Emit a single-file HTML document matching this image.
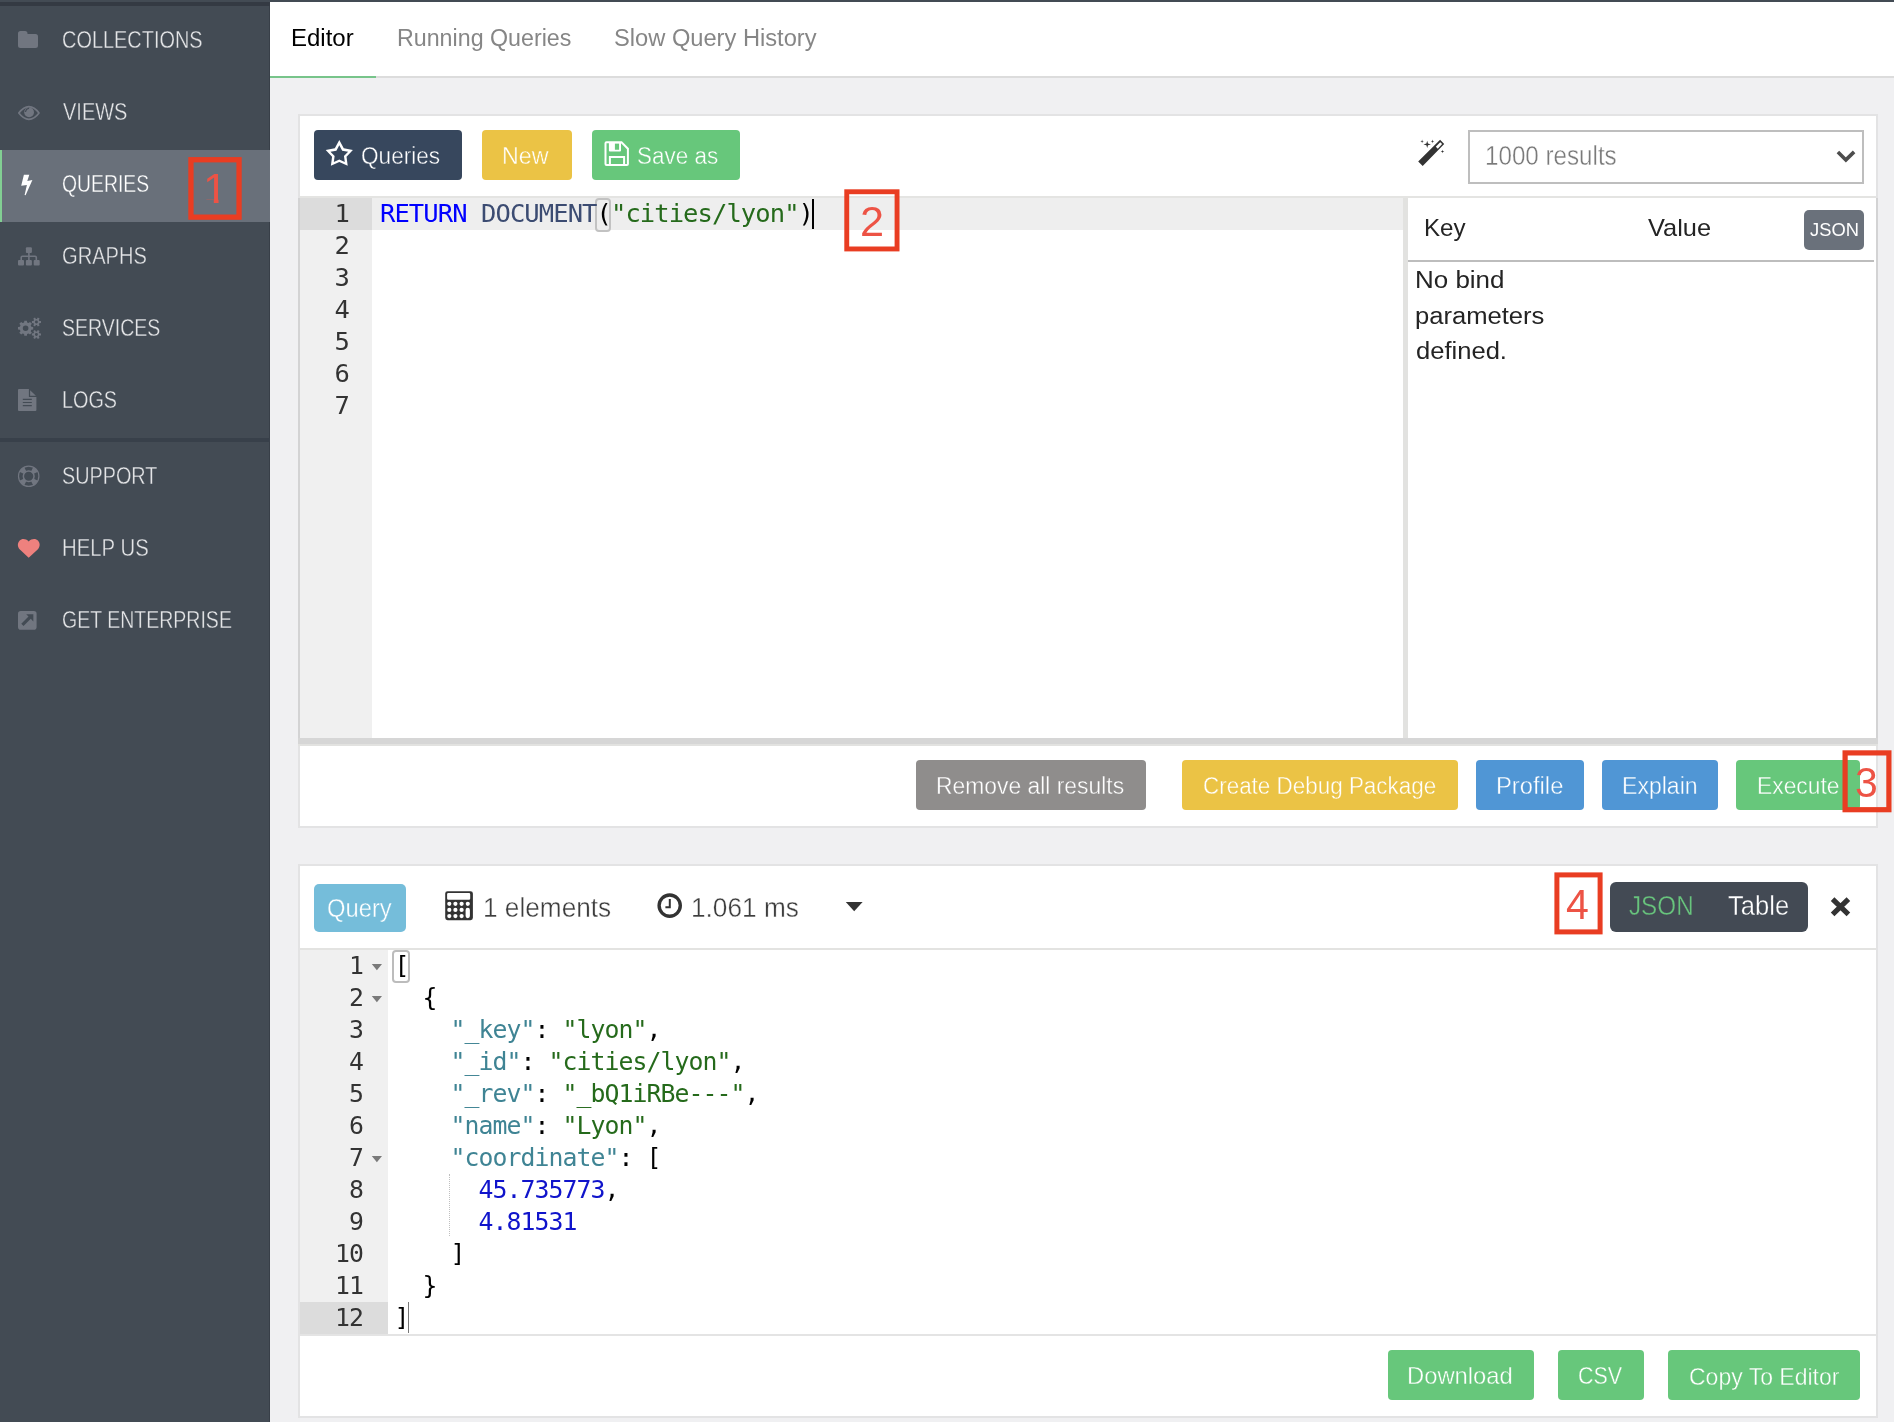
<!DOCTYPE html>
<html lang="en">
<head>
<meta charset="utf-8">
<title>ArangoDB Web Interface</title>
<style>
*{box-sizing:border-box;margin:0;padding:0}
html,body{width:1894px;height:1422px;overflow:hidden;background:#f0f0f2;font-family:"Liberation Sans",sans-serif;}
#root{position:absolute;left:0;top:0;width:1894px;height:1422px;will-change:transform}
.abs{position:absolute}
.t{position:absolute;white-space:nowrap;line-height:1;transform-origin:0 0;font-family:"Liberation Sans",sans-serif}
#side{position:absolute;left:0;top:0;width:270px;height:1422px;background:#434b54;}
#topbar{position:absolute;left:0;top:0;width:1894px;height:2px;background:#434b54;}
#topdark{position:absolute;left:0;top:2px;width:270px;height:4px;background:#343a43;}
#navactive{position:absolute;left:0;top:150px;width:270px;height:72px;background:#69707a;border-left:2px solid #82cf93}
#divider{position:absolute;left:0;top:438px;width:270px;height:3.6px;background:#38404a}
#tabs{position:absolute;left:270px;top:2px;width:1624px;height:76px;background:#fff;border-bottom:2px solid #dcdcdc;}
#tabline{position:absolute;left:270px;top:76px;width:106px;height:2px;background:#77c48a}
.panel{position:absolute;background:#fff;border:2px solid #e3e3e4;}
.btn{position:absolute;height:50px;border-radius:4px}
.green{background:#67c77b}.yellow{background:#ebc345}.blue{background:#5096d5}.grey{background:#8f8d8c}.navy{background:#37475d}.lblue{background:#75bdda;border-radius:5px}
.mono{font-family:"DejaVu Sans Mono","Liberation Mono",monospace;font-size:25.5px;letter-spacing:-0.92px;white-space:pre}
.m2{font-size:24.8px;letter-spacing:-0.93px}
.ln{position:absolute;text-align:right;color:#333;height:32px;line-height:32px}
.cl{position:absolute;height:32px;line-height:32px;color:#000}
.kw{color:#0000ff}.fn{color:#3c4c72}.str{color:#256a1b}.key{color:#3f8494}.num{color:#1014cb}
.redbox{position:absolute;border:5px solid #e93d22}
</style>
</head>
<body>
<div id="root">
<div id="side"></div>
<div id="topbar"></div>
<div id="topdark"></div>
<div class="abs" style="left:269px;top:6px;width:1px;height:1416px;background:#383f48"></div>
<div id="navactive"></div>
<div id="divider"></div>
<div id="tabs"></div>
<div id="tabline"></div>

<!-- PANEL 1 -->
<div class="panel" style="left:298px;top:114px;width:1580px;height:714px"></div>
<div class="btn navy" style="left:314px;top:130px;width:148px"></div>
<div class="btn yellow" style="left:482px;top:130px;width:90px"></div>
<div class="btn green" style="left:592px;top:130px;width:148px"></div>
<div class="abs" style="left:1468px;top:130px;width:396px;height:54px;border:2px solid #bebebe;background:#fff"></div>

<!-- editor 1 -->
<div class="abs" style="left:300px;top:196px;width:1576px;height:2px;background:#e4e4e2"></div>
<div class="abs" style="left:300px;top:198px;width:72px;height:540px;background:#f0f0f0"></div>
<div class="abs" style="left:300px;top:198px;width:72px;height:32px;background:#dcdcdc"></div>
<div class="abs" style="left:372px;top:198px;width:1031px;height:32px;background:#eeeeee"></div>
<div class="abs" style="left:1403px;top:198px;width:5px;height:540px;background:#e2e2e0"></div>
<div class="abs" style="left:298px;top:198px;width:2px;height:548px;background:#d3d3d4"></div>
<div class="abs" style="left:1876px;top:198px;width:2px;height:548px;background:#d3d3d4"></div>
<div class="abs" style="left:298px;top:738px;width:1580px;height:6px;background:#d6d6d6"></div>
<div class="abs" style="left:298px;top:744px;width:1580px;height:2px;background:#e2e2e0"></div>
<div class="mono ln" style="left:300px;top:197px;width:49px">1</div>
<div class="mono ln" style="left:300px;top:229px;width:49px">2</div>
<div class="mono ln" style="left:300px;top:261px;width:49px">3</div>
<div class="mono ln" style="left:300px;top:293px;width:49px">4</div>
<div class="mono ln" style="left:300px;top:325px;width:49px">5</div>
<div class="mono ln" style="left:300px;top:357px;width:49px">6</div>
<div class="mono ln" style="left:300px;top:389px;width:49px">7</div>
<div class="abs" style="left:595px;top:198px;width:16px;height:34px;border:2px solid #c2c2c2;border-radius:4px"></div>
<div class="mono cl" style="left:380px;top:197px"><span class="kw">RETURN</span> <span class="fn">DOCUMENT</span>(<span class="str">"cities/lyon"</span>)</div>
<div class="abs" style="left:812px;top:198.5px;width:2px;height:30.5px;background:#000"></div>

<!-- bind params -->
<div class="abs" style="left:1804px;top:210px;width:60px;height:40px;background:#6a717b;border-radius:5px"></div>
<div class="abs" style="left:1408px;top:259.6px;width:466px;height:2px;background:#bdbdbd"></div>

<!-- action buttons -->
<div class="btn grey" style="left:916px;top:760px;width:230px"></div>
<div class="btn yellow" style="left:1182px;top:760px;width:276px"></div>
<div class="btn blue" style="left:1476px;top:760px;width:108px"></div>
<div class="btn blue" style="left:1602px;top:760px;width:116px"></div>
<div class="btn green" style="left:1736px;top:760px;width:124px"></div>

<!-- PANEL 2 -->
<div class="panel" style="left:298px;top:864px;width:1580px;height:554px"></div>
<div class="btn lblue" style="left:314px;top:884px;width:92px;height:48px"></div>
<div class="abs" style="left:1610px;top:882px;width:198px;height:50px;background:#434a54;border-radius:6px"></div>
<div class="abs" style="left:300px;top:948px;width:1576px;height:2px;background:#e3e3e1"></div>

<!-- editor 2 -->
<div class="abs" style="left:300px;top:950px;width:88px;height:384px;background:#f0f0f0"></div>
<div class="abs" style="left:300px;top:1302px;width:88px;height:32px;background:#dcdcdc"></div>
<div class="abs" style="left:300px;top:1334px;width:1576px;height:2px;background:#e4e4e4"></div>
<div class="mono m2 ln" style="left:300px;top:949.5px;width:63px">1</div>
<div class="mono m2 ln" style="left:300px;top:981.5px;width:63px">2</div>
<div class="mono m2 ln" style="left:300px;top:1013.5px;width:63px">3</div>
<div class="mono m2 ln" style="left:300px;top:1045.5px;width:63px">4</div>
<div class="mono m2 ln" style="left:300px;top:1077.5px;width:63px">5</div>
<div class="mono m2 ln" style="left:300px;top:1109.5px;width:63px">6</div>
<div class="mono m2 ln" style="left:300px;top:1141.5px;width:63px">7</div>
<div class="mono m2 ln" style="left:300px;top:1173.5px;width:63px">8</div>
<div class="mono m2 ln" style="left:300px;top:1205.5px;width:63px">9</div>
<div class="mono m2 ln" style="left:300px;top:1237.5px;width:63px">10</div>
<div class="mono m2 ln" style="left:300px;top:1269.5px;width:63px">11</div>
<div class="mono m2 ln" style="left:300px;top:1301.5px;width:63px">12</div>
<div class="abs" style="left:392.4px;top:949.6px;width:17.2px;height:33.6px;border:2px solid #bcbcbc;border-radius:4px;background:#fff"></div>
<div class="mono m2 cl" style="left:394.5px;top:949.5px">[</div>
<div class="mono m2 cl" style="left:394.5px;top:981.5px">  {</div>
<div class="mono m2 cl" style="left:394.5px;top:1013.5px">    <span class="key">"_key"</span>: <span class="str">"lyon"</span>,</div>
<div class="mono m2 cl" style="left:394.5px;top:1045.5px">    <span class="key">"_id"</span>: <span class="str">"cities/lyon"</span>,</div>
<div class="mono m2 cl" style="left:394.5px;top:1077.5px">    <span class="key">"_rev"</span>: <span class="str">"_bQ1iRBe---"</span>,</div>
<div class="mono m2 cl" style="left:394.5px;top:1109.5px">    <span class="key">"name"</span>: <span class="str">"Lyon"</span>,</div>
<div class="mono m2 cl" style="left:394.5px;top:1141.5px">    <span class="key">"coordinate"</span>: [</div>
<div class="mono m2 cl" style="left:394.5px;top:1173.5px">      <span class="num">45.735773</span>,</div>
<div class="mono m2 cl" style="left:394.5px;top:1205.5px">      <span class="num">4.81531</span></div>
<div class="mono m2 cl" style="left:394.5px;top:1237.5px">    ]</div>
<div class="mono m2 cl" style="left:394.5px;top:1269.5px">  }</div>
<div class="mono m2 cl" style="left:394.5px;top:1301.5px">]</div>
<div class="abs" style="left:408px;top:1302px;width:1px;height:31px;background:#777"></div>
<div class="abs" style="left:449px;top:1174px;width:0;height:62px;border-left:1px dotted #bfbfbf"></div>

<!-- bottom buttons -->
<div class="btn green" style="left:1388px;top:1350px;width:146px"></div>
<div class="btn green" style="left:1558px;top:1350px;width:86px"></div>
<div class="btn green" style="left:1668px;top:1350px;width:192px"></div>

<!-- all UI labels -->
<div class="t" id="n0" style="left:62.43px;top:29.49px;font-size:23px;transform:scale(0.8665,1.0000);color:#e4e5e7;-webkit-text-stroke:0.35px #434b54">COLLECTIONS</div>
<div class="t" id="n1" style="left:63.12px;top:101.21px;font-size:23px;transform:scale(0.8691,1.0000);color:#e4e5e7;-webkit-text-stroke:0.35px #434b54">VIEWS</div>
<div class="t" id="n2" style="left:62.22px;top:173.21px;font-size:23px;transform:scale(0.8410,1.0000);color:#ffffff;-webkit-text-stroke:0.35px #69707a">QUERIES</div>
<div class="t" id="n3" style="left:62.45px;top:245.11px;font-size:23px;transform:scale(0.8740,1.0000);color:#e4e5e7;-webkit-text-stroke:0.35px #434b54">GRAPHS</div>
<div class="t" id="n4" style="left:62.47px;top:316.52px;font-size:23px;transform:scale(0.8488,1.0000);color:#e4e5e7;-webkit-text-stroke:0.35px #434b54">SERVICES</div>
<div class="t" id="n5" style="left:61.61px;top:389.21px;font-size:23px;transform:scale(0.8609,1.0000);color:#e4e5e7;-webkit-text-stroke:0.35px #434b54">LOGS</div>
<div class="t" id="n6" style="left:62.48px;top:464.53px;font-size:23px;transform:scale(0.8609,1.0000);color:#e4e5e7;-webkit-text-stroke:0.35px #434b54">SUPPORT</div>
<div class="t" id="n7" style="left:61.53px;top:536.51px;font-size:23px;transform:scale(0.8849,1.0000);color:#e4e5e7;-webkit-text-stroke:0.35px #434b54">HELP US</div>
<div class="t" id="n8" style="left:62.35px;top:609.18px;font-size:23px;transform:scale(0.8485,1.0000);color:#e4e5e7;-webkit-text-stroke:0.35px #434b54">GET ENTERPRISE</div>
<div class="t" id="tab0" style="left:291.14px;top:26.82px;font-size:23px;transform:scale(1.0428,1.0000);color:#000000">Editor</div>
<div class="t" id="tab1" style="left:396.74px;top:26.55px;font-size:23px;transform:scale(1.0102,1.0000);color:#868686">Running Queries</div>
<div class="t" id="tab2" style="left:613.62px;top:26.82px;font-size:23px;transform:scale(1.0291,1.0000);color:#868686">Slow Query History</div>
<div class="t" id="b0" style="left:361.19px;top:144.74px;font-size:23px;transform:scale(0.9829,1.0000);color:#ffffff;-webkit-text-stroke:0.38px #37475d">Queries</div>
<div class="t" id="b1" style="left:502.43px;top:144.70px;font-size:23px;transform:scale(1.0109,1.0000);color:#ffffff;-webkit-text-stroke:0.38px #ebc345">New</div>
<div class="t" id="b2" style="left:637.21px;top:144.76px;font-size:23px;transform:scale(0.9762,1.0000);color:#ffffff;-webkit-text-stroke:0.38px #67c77b">Save as</div>
<div class="t" id="sel" style="left:1485.44px;top:142.64px;font-size:27px;transform:scale(0.8953,1.0000);color:#7a7a7a;-webkit-text-stroke:0.38px #ffffff">1000 results</div>
<div class="t" id="key" style="left:1424.33px;top:215.82px;font-size:24px;transform:scale(1.0066,1.0000);color:#242424">Key</div>
<div class="t" id="val" style="left:1647.59px;top:215.72px;font-size:24px;transform:scale(1.0572,1.0000);color:#242424">Value</div>
<div class="t" id="jsn" style="left:1810.13px;top:220.78px;font-size:18px;transform:scale(1.0184,1.0000);color:#ffffff">JSON</div>
<div class="t" id="nb0" style="left:1415.13px;top:268.69px;font-size:23.5px;transform:scale(1.1045,1.0000);color:#242424">No bind</div>
<div class="t" id="nb1" style="left:1415.45px;top:304.54px;font-size:23.5px;transform:scale(1.0884,1.0000);color:#242424">parameters</div>
<div class="t" id="nb2" style="left:1415.97px;top:340.41px;font-size:23.5px;transform:scale(1.0879,1.0000);color:#242424">defined.</div>
<div class="t" id="a0" style="left:936.00px;top:774.99px;font-size:23.5px;transform:scale(0.9731,1.0000);color:#ffffff;-webkit-text-stroke:0.38px #8f8d8c">Remove all results</div>
<div class="t" id="a1" style="left:1203.36px;top:775.02px;font-size:23.5px;transform:scale(0.9545,1.0000);color:#ffffff;-webkit-text-stroke:0.38px #ebc345">Create Debug Package</div>
<div class="t" id="a2" style="left:1495.93px;top:775.19px;font-size:23.5px;transform:scale(1.0111,1.0000);color:#ffffff;-webkit-text-stroke:0.38px #5096d5">Profile</div>
<div class="t" id="a3" style="left:1622.48px;top:774.82px;font-size:23.5px;transform:scale(0.9813,1.0000);color:#ffffff;-webkit-text-stroke:0.38px #5096d5">Explain</div>
<div class="t" id="a4" style="left:1757.40px;top:774.82px;font-size:23.5px;transform:scale(0.9718,1.0000);color:#ffffff;-webkit-text-stroke:0.38px #67c77b">Execute</div>
<div class="t" id="q" style="left:327.10px;top:895.56px;font-size:25.5px;transform:scale(0.9324,1.0000);color:#ffffff;-webkit-text-stroke:0.38px #75bdda">Query</div>
<div class="t" id="el" style="left:483.02px;top:894.59px;font-size:27px;transform:scale(0.9703,1.0000);color:#3e3e3e;-webkit-text-stroke:0.38px #ffffff">1 elements</div>
<div class="t" id="ms" style="left:691.10px;top:894.82px;font-size:27px;transform:scale(0.9711,1.0000);color:#3e3e3e;-webkit-text-stroke:0.38px #ffffff">1.061 ms</div>
<div class="t" id="tj" style="left:1629.00px;top:892.79px;font-size:27px;transform:scale(0.8979,1.0000);color:#68c47d;-webkit-text-stroke:0.38px #434a54">JSON</div>
<div class="t" id="tt" style="left:1727.89px;top:893.10px;font-size:27px;transform:scale(0.9477,1.0000);color:#ffffff;-webkit-text-stroke:0.38px #434a54">Table</div>
<div class="t" id="d0" style="left:1406.96px;top:1364.14px;font-size:24px;transform:scale(0.9909,1.0000);color:#ffffff;-webkit-text-stroke:0.38px #67c77b">Download</div>
<div class="t" id="d1" style="left:1578.29px;top:1364.49px;font-size:24px;transform:scale(0.8953,1.0000);color:#ffffff;-webkit-text-stroke:0.38px #67c77b">CSV</div>
<div class="t" id="d2" style="left:1689.02px;top:1364.50px;font-size:24px;transform:scale(0.9578,1.0000);color:#ffffff;-webkit-text-stroke:0.38px #67c77b">Copy To Editor</div>
<div class="t" id="r2" style="left:859.61px;top:200.60px;font-size:42px;transform:scale(1.0307,1.0000);color:#ed5345">2</div>
<div class="t" id="r3" style="left:1855.23px;top:761.66px;font-size:42px;transform:scale(0.9744,1.0000);color:#ed5345">3</div>
<div class="t" id="r4" style="left:1565.98px;top:883.86px;font-size:42px;transform:scale(0.9774,1.0000);color:#ed5345">4</div>

<!-- annotation digit 1 (foot clipped to match the reference glyph) -->
<div class="t" id="r1" style="left:202.6px;top:168.1px;font-size:42px;transform:scaleX(1.05);color:#ed5345;clip-path:polygon(0 0,15px 0,15px 100%,10.3px 100%,10.3px 32px,0 32px)">1</div>
<!-- ICON OVERLAY -->
<svg class="abs" style="left:0;top:0;pointer-events:none" width="1894" height="1422" viewBox="0 0 1894 1422">
<g fill="#717680">
<!-- folder -->
<path d="M20.5,31 H25 a2.5,2.5 0 0 1 2.5,2.5 V34 H35.5 a2.5,2.5 0 0 1 2.5,2.5 V45.5 a2.5,2.5 0 0 1 -2.5,2.5 H20.5 a2.5,2.5 0 0 1 -2.5,-2.5 V33.5 a2.5,2.5 0 0 1 2.5,-2.5 Z"/>
<!-- eye -->
<path d="M18.8,113 C22.2,108.6 25.6,106.6 28.9,106.6 C32.4,106.6 35.8,108.6 39,113 C35.8,117.4 32.4,119.3 28.9,119.3 C25.6,119.3 22.2,117.4 18.8,113 Z" fill="none" stroke="#717680" stroke-width="1.7" stroke-linejoin="round"/>
<circle cx="29.1" cy="112.3" r="4.9"/>
<path d="M25.6,111.3 C25.9,109.7 27,108.6 28.5,108.3" fill="none" stroke="#434b54" stroke-width="1.3" stroke-linecap="round"/>
<!-- sitemap -->
<rect x="25.9" y="247.2" width="6" height="5.7" rx="1"/>
<rect x="18" y="259.9" width="6" height="5.7" rx="1"/>
<rect x="25.9" y="259.9" width="6" height="5.7" rx="1"/>
<rect x="33.7" y="259.9" width="6" height="5.7" rx="1"/>
<path d="M28.9,252.5 V260.5 M21.2,260.5 V257.4 a1.2,1.2 0 0 1 1.2,-1.2 H35.1 a1.2,1.2 0 0 1 1.2,1.2 V260.5" fill="none" stroke="#717680" stroke-width="1.6"/>
<!-- cogs -->
<path fill-rule="evenodd" d="M31.3,326.7 L33.2,326.9 L33.2,329.6 L31.3,329.8 L30.7,331.2 L31.9,332.7 L30.0,334.5 L28.6,333.4 L27.1,334.0 L26.9,335.8 L24.3,335.8 L24.1,334.0 L22.6,333.4 L21.2,334.5 L19.3,332.7 L20.5,331.2 L19.9,329.8 L18.0,329.6 L18.0,326.9 L19.9,326.7 L20.5,325.3 L19.3,323.8 L21.2,322.0 L22.6,323.1 L24.1,322.5 L24.3,320.7 L26.9,320.7 L27.1,322.5 L28.6,323.1 L30.0,322.0 L31.9,323.8 L30.7,325.3 Z M22.80,328.25 a2.80,2.80 0 1 0 5.60,0 a2.80,2.80 0 1 0 -5.60,0 Z M39.3,321.0 L41.0,321.0 L41.0,323.1 L39.3,323.2 L38.8,324.0 L39.6,325.5 L37.8,326.5 L36.9,325.1 L35.9,325.1 L35.0,326.5 L33.3,325.5 L34.0,324.0 L33.5,323.2 L31.9,323.1 L31.9,321.0 L33.5,321.0 L34.0,320.1 L33.3,318.6 L35.0,317.6 L35.9,319.0 L36.9,319.0 L37.8,317.6 L39.6,318.6 L38.8,320.1 Z M34.99,322.06 a1.45,1.45 0 1 0 2.90,0 a1.45,1.45 0 1 0 -2.90,0 Z M39.3,333.3 L41.0,333.4 L41.0,335.5 L39.3,335.5 L38.8,336.4 L39.6,337.9 L37.8,338.9 L36.9,337.5 L35.9,337.5 L35.0,338.9 L33.3,337.9 L34.0,336.4 L33.5,335.5 L31.9,335.5 L31.9,333.4 L33.5,333.3 L34.0,332.5 L33.3,331.0 L35.0,330.0 L35.9,331.4 L36.9,331.4 L37.8,330.0 L39.6,331.0 L38.8,332.5 Z M34.99,334.44 a1.45,1.45 0 1 0 2.90,0 a1.45,1.45 0 1 0 -2.90,0 Z"/>
<!-- file -->
<path fill-rule="evenodd" d="M19,389.1 H28.9 V396.9 H36.4 V409.9 a1,1 0 0 1 -1,1 H19 a1,1 0 0 1 -1,-1 V390.1 a1,1 0 0 1 1,-1 Z M22.8,398.8 V400 H31.8 V398.8 Z M22.8,401.9 V403.1 H31.8 V401.9 Z M22.8,405 V406.2 H31.8 V405 Z"/>
<path d="M30.1,390.3 L35.9,395.75 H30.1 Z"/>
<!-- life ring -->
<circle cx="28.7" cy="476.25" r="10.2" fill="none" stroke="#717680" stroke-width="1.2"/>
<circle cx="28.7" cy="476.25" r="5.35" fill="none" stroke="#717680" stroke-width="1.5"/>
<path d="M33.19,478.44 L38.05,480.81 A10.40,10.40 0 0 1 33.26,485.60 L30.89,480.74 A5.00,5.00 0 0 0 33.19,478.44 Z M26.51,480.74 L24.14,485.60 A10.40,10.40 0 0 1 19.35,480.81 L24.21,478.44 A5.00,5.00 0 0 0 26.51,480.74 Z M24.21,474.06 L19.35,471.69 A10.40,10.40 0 0 1 24.14,466.90 L26.51,471.76 A5.00,5.00 0 0 0 24.21,474.06 Z M30.89,471.76 L33.26,466.90 A10.40,10.40 0 0 1 38.05,471.69 L33.19,474.06 A5.00,5.00 0 0 0 30.89,471.76 Z"/>
<!-- external link square -->
<path fill-rule="evenodd" d="M20.8,611 H33.8 a2.8,2.8 0 0 1 2.8,2.8 V626.9 a2.8,2.8 0 0 1 -2.8,2.8 H20.8 a2.8,2.8 0 0 1 -2.8,-2.8 V613.8 a2.8,2.8 0 0 1 2.8,-2.8 Z M26.2,614.2 L28.52,616.52 L21.27,623.77 L23.53,626.03 L30.78,618.78 L33.35,621.4 V614.2 Z"/>
</g>
<!-- bolt -->
<path d="M23.9,174.8 H29.3 L27.3,180.9 L32.4,180 L25.6,195.2 L24.6,194.9 L26.9,185 L21.2,185.8 Z" fill="#fff"/>
<!-- heart -->
<path d="M28.7,557.8 L19.6,549.2 C17.3,546.7 17.4,543 19.5,540.8 C21.8,538.4 25.6,538.5 28.7,541.4 C31.8,538.5 35.8,538.4 38.1,540.8 C40.2,543 40.2,546.7 37.9,549.2 Z" fill="#ee817e"/>
<!-- star -->
<path fill-rule="evenodd" fill="#fff" d="M339.30,140.00 L343.77,148.15 L352.90,149.88 L346.53,156.65 L347.71,165.87 L339.30,161.90 L330.89,165.87 L332.07,156.65 L325.70,149.88 L334.83,148.15 Z M339.30,145.30 L342.18,150.64 L348.14,151.73 L343.96,156.11 L344.77,162.12 L339.30,159.50 L333.83,162.12 L334.64,156.11 L330.46,151.73 L336.42,150.64 Z"/>
<!-- floppy -->
<path d="M606.5,142.3 H621.5 L627.9,148.7 V164.1 a1,1 0 0 1 -1,1 H606.5 a1,1 0 0 1 -1,-1 V143.3 a1,1 0 0 1 1,-1 Z" fill="none" stroke="#fff" stroke-width="2"/>
<path fill-rule="evenodd" fill="#fff" d="M608.9,143 H621 V150.5 a1,1 0 0 1 -1,1 H609.9 a1,1 0 0 1 -1,-1 Z M614.9,143.6 V149.7 H619.1 V143.6 Z"/>
<path d="M609.9,165 V157 H624.1 V165" fill="none" stroke="#fff" stroke-width="2"/>
<!-- wand -->
<path fill-rule="evenodd" fill="#333" d="M1440.1,139.8 L1444.2,143.9 L1422.7,166 L1418.2,161.5 Z M1440.2,142.3 L1435.8,146.7 L1437.8,148.7 L1442.1,144.1 Z"/>
<path fill="#333" d="M1427.2,140.7 L1428,143.6 L1430.9,144.4 L1428,145.2 L1427.2,148.1 L1426.4,145.2 L1423.5,144.4 L1426.4,143.6 Z M1422.1,139.6 L1422.5,141 L1423.9,141.4 L1422.5,141.8 L1422.1,143.2 L1421.7,141.8 L1420.3,141.4 L1421.7,141 Z M1432.5,139.6 L1432.9,141 L1434.3,141.4 L1432.9,141.8 L1432.5,143.2 L1432.1,141.8 L1430.7,141.4 L1432.1,141 Z M1442.5,149.7 L1442.9,151.1 L1444.3,151.5 L1442.9,151.9 L1442.5,153.3 L1442.1,151.9 L1440.7,151.5 L1442.1,151.1 Z"/>
<!-- select chevron -->
<path d="M1837.9,151.9 L1845.9,159.9 L1854.1,151.9" fill="none" stroke="#4d4d4d" stroke-width="3.6"/>
<!-- calculator -->
<path fill-rule="evenodd" fill="#333" d="M1.6,0 H25.3 a2.4,2.4 0 0 1 2.4,2.4 V26.6 a2.4,2.4 0 0 1 -2.4,2.4 H2.4 a2.4,2.4 0 0 1 -2.4,-2.4 V2.4 a2.4,2.4 0 0 1 2.4,-2.4 Z M3.1,1.9 a1.2,1.2 0 0 0 -1.2,1.2 V7.3 a1.2,1.2 0 0 0 1.2,1.2 H23.8 a1.2,1.2 0 0 0 1.2,-1.2 V3.1 a1.2,1.2 0 0 0 -1.2,-1.2 Z  M2,12.6 a2.1,2.1 0 1 0 4.2,0 a2.1,2.1 0 1 0 -4.2,0 Z M8.1,12.6 a2.1,2.1 0 1 0 4.2,0 a2.1,2.1 0 1 0 -4.2,0 Z M14.3,12.6 a2.1,2.1 0 1 0 4.2,0 a2.1,2.1 0 1 0 -4.2,0 Z M20.5,12.6 a2.1,2.1 0 1 0 4.2,0 a2.1,2.1 0 1 0 -4.2,0 Z M2,18.7 a2.1,2.1 0 1 0 4.2,0 a2.1,2.1 0 1 0 -4.2,0 Z M8.1,18.7 a2.1,2.1 0 1 0 4.2,0 a2.1,2.1 0 1 0 -4.2,0 Z M14.3,18.7 a2.1,2.1 0 1 0 4.2,0 a2.1,2.1 0 1 0 -4.2,0 Z M2,24.9 a2.1,2.1 0 1 0 4.2,0 a2.1,2.1 0 1 0 -4.2,0 Z M8.1,24.9 a2.1,2.1 0 1 0 4.2,0 a2.1,2.1 0 1 0 -4.2,0 Z M14.3,24.9 a2.1,2.1 0 1 0 4.2,0 a2.1,2.1 0 1 0 -4.2,0 Z M20.4,18.7 a2.15,2.15 0 0 1 4.3,0 V24.9 a2.15,2.15 0 0 1 -4.3,0 Z" transform="translate(445.2,891.2)"/>
<!-- clock -->
<circle cx="669.7" cy="905.6" r="10.6" fill="none" stroke="#333" stroke-width="3.4"/>
<path d="M669.8,899 V907.3 H665.4" fill="none" stroke="#333" stroke-width="2"/>
<!-- caret -->
<path d="M845.8,901.9 H862.6 L854.2,911.2 Z" fill="#333"/>
<!-- times -->
<path d="M1832.6,899.2 L1848.4,914.4 M1848.4,899.2 L1832.6,914.4" fill="none" stroke="#333" stroke-width="5.2"/>
<!-- fold arrows -->
<path d="M371.8,964 H382 L376.9,970.3 Z M371.8,996 H382 L376.9,1002.3 Z M371.8,1156 H382 L376.9,1162.3 Z" fill="#7a7a7a"/>
<!-- annotation boxes -->
<g fill="none" stroke="#e93d22">
<rect x="190.95" y="159.75" width="48.1" height="57.4" stroke-width="5.3"/>
<rect x="846.75" y="191.75" width="50.3" height="57.2" stroke-width="4.9"/>
<rect x="1845.1" y="752.9" width="43.8" height="56.8" stroke-width="5.2"/>
<rect x="1556.9" y="874.9" width="43.2" height="57" stroke-width="5"/>
</g>
</svg>
</div>
</body>
</html>
